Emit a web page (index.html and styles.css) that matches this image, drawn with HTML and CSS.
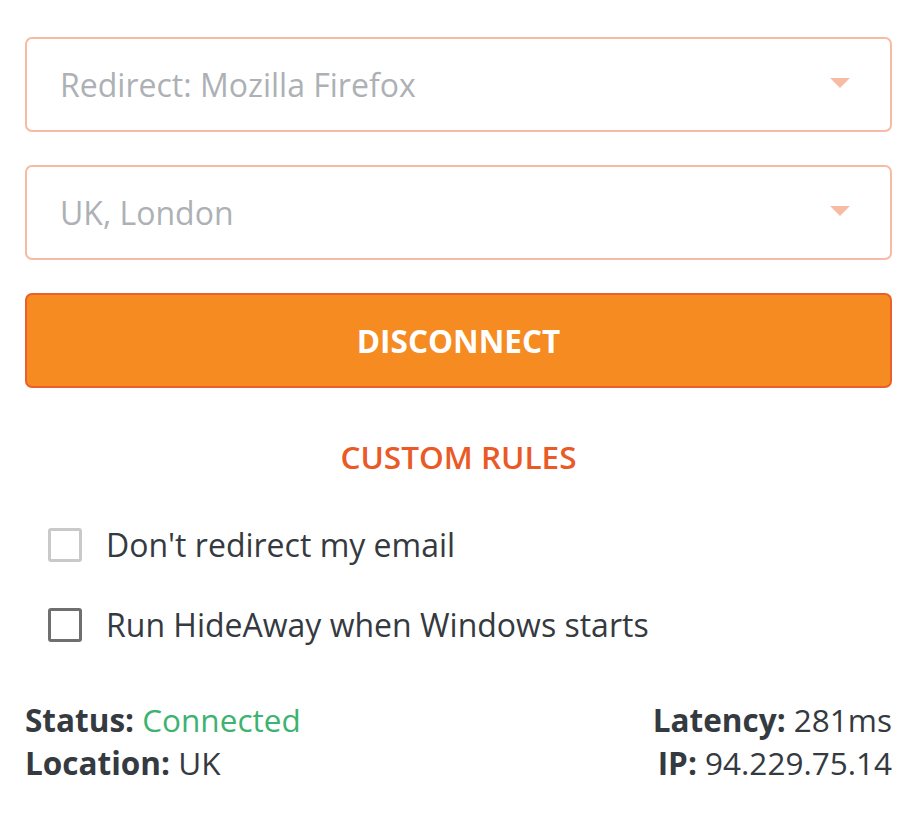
FILE: index.html
```html
<!DOCTYPE html>
<html lang="en">
<head>
  <meta charset="UTF-8" />
  <meta name="viewport" content="width=device-width, initial-scale=1.0" />
  <title>HideAway</title>
  <link rel="stylesheet" href="styles.css">
</head>
<body>

<div class="panel">
  <div class="select">
    <span class="select-text">Redirect: Mozilla Firefox</span>
    <span class="caret"></span>
  </div>

  <div class="select">
    <span class="select-text">UK, London</span>
    <span class="caret"></span>
  </div>

  <button class="disconnect">DISCONNECT</button>

  <a class="custom-rules" href="#">CUSTOM RULES</a>

  <label class="check">
    <span class="box light"></span>
    Don't redirect my email
  </label>

  <label class="check">
    <span class="box dark"></span>
    Run HideAway when Windows starts
  </label>

  <div class="status">
    <div class="status-col">
      <div><b>Status:</b> <span class="ok">Connected</span></div>
      <div><b>Location:</b> UK</div>
    </div>
    <div class="status-col right">
      <div><b>Latency:</b> 281ms</div>
      <div><b>IP:</b> 94.229.75.14</div>
    </div>
  </div>
</div>

</body>
</html>
```

FILE: styles.css
```css
body {
  font-family: 'Open Sans', 'Liberation Sans', sans-serif;
  background-color: #ffffff;
  color: #343a40;
  margin: 0;
}

.panel {
  padding: 37px 30px 0 25px;
}

.select {
  height: 95px;
  box-sizing: border-box;
  border: 2px solid #f7bba3;
  border-radius: 7px;
  display: flex;
  align-items: center;
  justify-content: space-between;
  padding: 0 40px 0 33px;
  margin-bottom: 33px;
}

.select-text {
  font-size: 32px;
  color: #adb1b5;
}

.caret {
  width: 0;
  height: 0;
  border-left: 10px solid transparent;
  border-right: 10px solid transparent;
  border-top: 10px solid #f7bba3;
  margin-top: -4px;
}

.disconnect {
  display: block;
  width: 100%;
  height: 95px;
  background-color: #f58b21;
  border: 2px solid #e9602a;
  border-radius: 7px;
  color: #ffffff;
  font-family: inherit;
  font-size: 31.5px;
  font-weight: 700;
  cursor: pointer;
}

.custom-rules {
  display: block;
  text-align: center;
  margin-top: 49px;
  color: #e95a27;
  font-size: 31.5px;
  font-weight: 600;
  text-decoration: none;
  line-height: 40px;
}

.check {
  display: flex;
  align-items: center;
  gap: 24px;
  margin-left: 23px;
  font-size: 32px;
  line-height: 40px;
  height: 40px;
  cursor: pointer;
}

.custom-rules + .check {
  margin-top: 48px;
}

.check + .check {
  margin-top: 40px;
}

.box {
  width: 34px;
  height: 34px;
  box-sizing: border-box;
  border: 3px solid #c9c9c9;
  border-radius: 3px;
  flex-shrink: 0;
}

.box.dark {
  border-color: #6f6f6f;
}

.status {
  display: flex;
  justify-content: space-between;
  margin-top: 53px;
  font-size: 31.5px;
  line-height: 43px;
}

.status b {
  font-weight: 700;
}

.status-col.right {
  text-align: right;
}

.ok {
  color: #3cb371;
}
```
